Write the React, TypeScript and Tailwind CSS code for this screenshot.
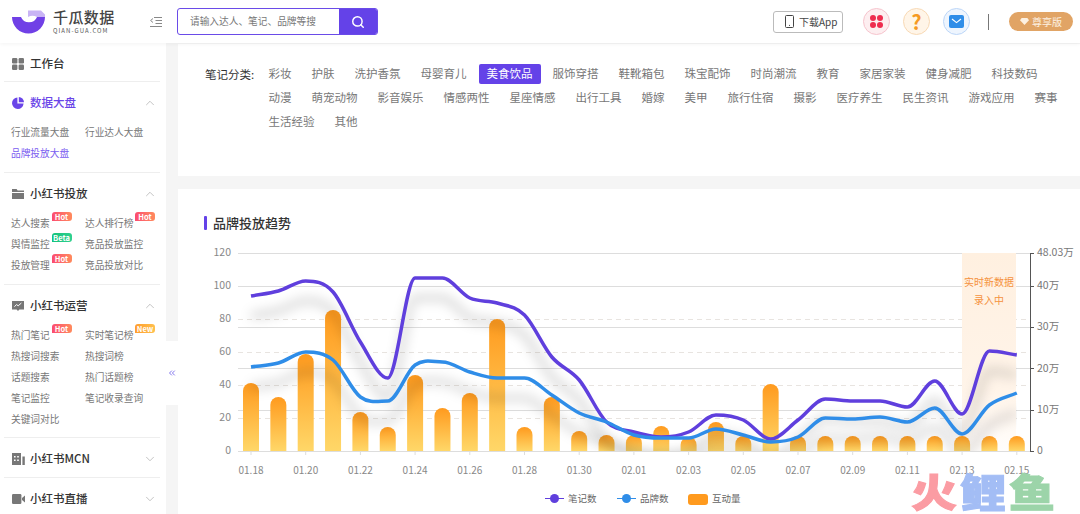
import { ChevronUp, ChevronDown, ChevronsLeft, Search } from "lucide-react";
import type { ReactNode } from "react";

const row1 = ["彩妆", "护肤", "洗护香氛", "母婴育儿", "美食饮品", "服饰穿搭", "鞋靴箱包", "珠宝配饰", "时尚潮流", "教育", "家居家装", "健身减肥", "科技数码"];
const row2 = ["动漫", "萌宠动物", "影音娱乐", "情感两性", "星座情感", "出行工具", "婚嫁", "美甲", "旅行住宿", "摄影", "医疗养生", "民生资讯", "游戏应用", "赛事"];
const row3 = ["生活经验", "其他"];
const categories = [...row1, ...row2, ...row3];

const barTops = [383, 397, 354, 310, 412, 427, 375, 408, 393, 319, 427, 397, 431, 435, 435, 426, 437, 422, 436, 384, 436, 436, 436, 436, 436, 436, 436, 436, 436];
const purple = [296, 291, 281, 292, 342, 378, 278, 278, 298, 303, 315, 357, 380, 422, 432, 437, 432, 415, 420, 439, 420, 399, 401, 401, 407, 381, 414, 351, 355];
const blue = [367, 363, 352, 360, 397, 401, 365, 362, 372, 378, 378, 395, 413, 422, 435, 438, 438, 429, 435, 442, 437, 418, 419, 417, 422, 408, 434, 405, 393];
const xLabels = ["01.18", "01.20", "01.22", "01.24", "01.26", "01.28", "01.30", "02.01", "02.03", "02.05", "02.07", "02.09", "02.11", "02.13", "02.15"];

const xAt = (i: number) => 251 + i * 27.35;

// smooth line through the points, tangent goes flat at peaks so it doesn't overshoot
function smooth(ys: number[]) {
  const last = ys.length - 1;
  const slope = (i: number) => {
    if (i === 0) return ys[1] - ys[0];
    if (i === last) return ys[last] - ys[last - 1];
    const a = ys[i - 1];
    const b = ys[i];
    const c = ys[i + 1];
    if ((b - a) * (c - b) <= 0) return 0;
    return (c - a) / 2;
  };
  const step = 27.35;
  let d = `M${xAt(0)} ${ys[0]}`;
  for (let i = 0; i < last; i++) {
    const c1y = ys[i] + slope(i) / 3;
    const c2y = ys[i + 1] - slope(i + 1) / 3;
    d += ` C${xAt(i) + step / 3} ${c1y} ${xAt(i + 1) - step / 3} ${c2y} ${xAt(i + 1)} ${ys[i + 1]}`;
  }
  return d;
}

function Badge({ kind, left }: { kind: string; left: string }) {
  const color =
    kind === "Hot"
      ? "bg-gradient-to-r from-[#fb4a70] to-[#ff8a5c]"
      : kind === "Beta"
        ? "bg-gradient-to-r from-[#12c27a] to-[#2fd08f]"
        : "bg-gradient-to-r from-[#ff9d2e] to-[#ffc04d]";
  return (
    <span className={`absolute top-0 flex h-[9px] w-[20px] items-center justify-center rounded-[3px] rounded-bl-none text-[7.5px] font-bold leading-none text-white ${left} ${color}`}>
      {kind}
    </span>
  );
}

type SubItem = { label: string; badge?: string; active?: boolean };

function Section({ icon, title, items, open = true, active = false, border = true, pb = "pb-[9px]" }: {
  icon: ReactNode;
  title: string;
  items?: SubItem[];
  open?: boolean;
  active?: boolean;
  border?: boolean;
  pb?: string;
}) {
  return (
    <div className={`ml-1 w-[156px] ${border ? "border-b border-[#eeeeee]" : ""} ${items ? pb : ""}`}>
      <div className="flex h-[39px] items-center pl-2 pr-[3px] pt-[3px]">
        <span className="flex w-[18px] shrink-0">{icon}</span>
        <span className={`flex-1 text-[11.5px] font-medium ${active ? "text-[#6a45e8]" : "text-[#333333]"}`}>{title}</span>
        {open ? <ChevronUp size={14} strokeWidth={1.2} className="text-[#aaaaaa]" /> : <ChevronDown size={14} strokeWidth={1.2} className="text-[#aaaaaa]" />}
      </div>
      {items && (
        <div className="grid grid-cols-[74px_1fr] pl-[7px]">
          {items.map((it, i) => (
            <div key={it.label} className={`relative flex h-[21px] items-center pt-[2px] text-[9.7px] ${it.active ? "text-[#7a5cf0]" : "text-[#777777]"}`}>
              {it.label}
              {it.badge && <Badge kind={it.badge} left={i % 2 === 0 ? "left-[40.5px]" : "left-[50px]"} />}
            </div>
          ))}
        </div>
      )}
    </div>
  );
}

function Sidebar() {
  return (
    <aside className="w-[166px] shrink-0 bg-white">
      <div className="ml-1 flex h-[39px] w-[156px] items-center border-b border-[#eeeeee] pl-2 pt-[3px]">
        <svg width="12" height="12" viewBox="0 0 12 12" className="mr-[6px]" fill="#777777">
          <rect width="5.4" height="5.4" rx="1.2" />
          <rect x="6.6" width="5.4" height="5.4" rx="1.2" />
          <rect y="6.6" width="5.4" height="5.4" rx="1.2" />
          <rect x="6.6" y="6.6" width="5.4" height="5.4" rx="1.2" />
        </svg>
        <span className="text-[11.5px] font-medium text-[#333333]">工作台</span>
      </div>
      <Section
        active
        title="数据大盘"
        icon={
          <svg width="12" height="12" viewBox="0 0 12 12" fill="#6a45e8">
            <path d="M5.4.4A5.8 5.8 0 1 0 11.6 6.6H5.4Z" />
            <path d="M6.8 0A5.4 5.4 0 0 1 12 5.2H6.8Z" />
          </svg>
        }
        items={[{ label: "行业流量大盘" }, { label: "行业达人大盘" }, { label: "品牌投放大盘", active: true }]}
      />
      <Section
        title="小红书投放"
        icon={
          <svg width="12" height="12" viewBox="0 0 12 12" fill="#777777">
            <path d="M0 1h4.6l1 1.6H12V4H0Z" />
            <path d="M0 5h12v6H0Z" />
          </svg>
        }
        items={[
          { label: "达人搜索", badge: "Hot" },
          { label: "达人排行榜", badge: "Hot" },
          { label: "舆情监控", badge: "Beta" },
          { label: "竞品投放监控" },
          { label: "投放管理", badge: "Hot" },
          { label: "竞品投放对比" },
        ]}
      />
      <Section
        title="小红书运营"
        pb="pb-2"
        icon={
          <svg width="12" height="12" viewBox="0 0 12 12">
            <path d="M0 1h12v8.4H7.4L6 11 4.6 9.4H0Z" fill="#777777" />
            <path d="M2.4 6.6 4.6 4.6 6.2 5.8 9.4 3" fill="none" stroke="#ffffff" strokeWidth="1" />
          </svg>
        }
        items={[
          { label: "热门笔记", badge: "Hot" },
          { label: "实时笔记榜", badge: "New" },
          { label: "热搜词搜索" },
          { label: "热搜词榜" },
          { label: "话题搜索" },
          { label: "热门话题榜" },
          { label: "笔记监控" },
          { label: "笔记收录查询" },
          { label: "关键词对比" },
        ]}
      />
      <Section
        open={false}
        title="小红书MCN"
        icon={
          <svg width="13" height="12" viewBox="0 0 13 12">
            <rect width="9" height="12" fill="#777777" />
            <rect x="10.4" y="3.5" width="2.4" height="8.5" fill="#777777" />
            <path d="M2 3h1.6v1.6H2ZM5.2 3h1.6v1.6H5.2ZM2 6.4h1.6V8H2ZM5.2 6.4h1.6V8H5.2Z" fill="#ffffff" />
          </svg>
        }
      />
      <Section
        open={false}
        border={false}
        title="小红书直播"
        icon={
          <svg width="13" height="12" viewBox="0 0 13 12" fill="#777777">
            <rect y="1" width="9.4" height="10" rx="1.2" />
            <path d="M10 5 13 2.6v6.8L10 7Z" />
          </svg>
        }
      />
    </aside>
  );
}

function Header() {
  return (
    <header className="relative z-10 flex h-[43px] shrink-0 items-center bg-white pl-3 shadow-[0_1px_4px_rgba(0,0,0,0.05)]">
      <svg width="34" height="26" viewBox="12 8 34 26" className="shrink-0">
        <path d="M12 16A16.5 16.5 0 0 0 45 16H37A8.5 8 0 0 1 21 16Z" fill="#7040e6" />
        <path d="M28 9.4H41L45 13.5V16H37A8 7 0 0 0 28 16Z" fill="#c9b4f5" />
      </svg>
      <div className="ml-[7px] flex w-[63px] shrink-0 flex-col">
        <span className="text-[15px] font-medium leading-[16px] tracking-[0.4px] text-[#444444]">千瓜数据</span>
        <span className="mt-[2px] text-[6px] leading-[7px] tracking-[1.05px] text-[#555555]">QIAN-GUA.COM</span>
      </div>
      <svg width="12" height="12" viewBox="0 0 12 12" className="ml-[34px] shrink-0" stroke="#888888" strokeWidth="1" fill="none">
        <path d="M4 1.5h8M5.5 4.5H12M5.5 7.5H12M0 10.5h12" />
        <path d="M3 2.5 0.6 4.5 3 6.5" />
      </svg>
      <div className="ml-[15px] flex h-[27px] w-[201px] shrink-0 overflow-hidden rounded-[3px] border border-[#6a4be8]">
        <span className="flex flex-1 items-center pl-3 text-[9.7px] text-[#777777]">请输入达人、笔记、品牌等搜</span>
        <span className="flex w-[38px] items-center justify-center bg-[#6442e8]">
          <Search size={14} strokeWidth={2.5} className="text-white" />
        </span>
      </div>
      <div className="ml-[395px] flex h-[22px] w-[70px] shrink-0 items-center rounded-[3px] border border-[#bbbbbb] pl-[11px]">
        <svg width="9" height="13" viewBox="0 0 9 13" fill="none" stroke="#444444" strokeWidth="1">
          <rect x="0.5" y="0.5" width="8" height="12" rx="1" />
          <path d="M4 10.4h1" />
        </svg>
        <span className="ml-[5px] text-[10px] text-[#444444]">下载App</span>
      </div>
      <span className="ml-5 flex h-[27px] w-[27px] shrink-0 items-center justify-center rounded-full border border-[#f6c4cd] bg-[#fdeef0]">
        <span className="grid grid-cols-2 gap-[1px]">
          <i className="h-[6px] w-[6px] rounded-full bg-[#ee2d4f]" />
          <i className="h-[6px] w-[6px] rounded-full bg-[#ee2d4f]" />
          <i className="h-[6px] w-[6px] rounded-full bg-[#ee2d4f]" />
          <i className="h-[6px] w-[6px] rounded-full bg-[#ee2d4f]" />
        </span>
      </span>
      <span className="ml-[13px] flex h-[27px] w-[27px] shrink-0 items-center justify-center rounded-full border border-[#f8d9b5] bg-[#fff5e8] text-[20px] font-bold leading-none text-[#f59a23]">?</span>
      <span className="ml-[13px] flex h-[27px] w-[27px] shrink-0 items-center justify-center rounded-full border border-[#bcd6f8] bg-[#eef5fe]">
        <svg width="15" height="13" viewBox="0 0 15 13">
          <rect width="15" height="13" rx="2" fill="#2f8de8" />
          <path d="M3 4 7.5 7.6 12 4" fill="none" stroke="#ffffff" strokeWidth="1.2" />
        </svg>
      </span>
      <span className="ml-[18px] h-[16px] w-px shrink-0 bg-[#777777]" />
      <span className="ml-5 flex h-[19px] w-[64px] shrink-0 items-center justify-center gap-[3px] rounded-full bg-[#e1a465] text-[10px] text-[#fdf1e2]">
        <svg width="9" height="7" viewBox="0 0 9 7" fill="#fdf1e2">
          <path d="M1.6 0h5.8L9 2.2 4.5 7 0 2.2Z" />
        </svg>
        尊享版
      </span>
    </header>
  );
}

function Chart() {
  const solid = [253.5, 286.5, 327.5, 368.5, 410.5];
  const dashed = [319.5, 352.5, 385.5, 418.5];
  const left = [[120, 252], [100, 285], [80, 318], [60, 351], [40, 384], [20, 417], [0, 450]];
  const right: [string, number][] = [["48.03万", 252], ["40万", 285], ["30万", 326], ["20万", 368], ["10万", 409], ["0", 450]];
  const purpleD = smooth(purple);
  const blueD = smooth(blue);
  return (
    <svg width="902" height="274" viewBox="178 240 902 274" className="block">
      <defs>
        <linearGradient id="bar" x1="0" y1="0" x2="0" y2="1">
          <stop offset="0" stopColor="#ff9a1e" />
          <stop offset="1" stopColor="#ffd768" />
        </linearGradient>
        <linearGradient id="band" x1="0" y1="0" x2="0" y2="1">
          <stop offset="0" stopColor="#fff0e0" />
          <stop offset="0.7" stopColor="#fff4e9" />
          <stop offset="1" stopColor="#fffdfb" />
        </linearGradient>
        <filter id="soft" x="-5%" y="-40%" width="110%" height="180%">
          <feGaussianBlur stdDeviation="6" />
        </filter>
        <clipPath id="plot">
          <rect x="238" y="253" width="779" height="198" />
        </clipPath>
      </defs>

      {solid.map((y) => (
        <line key={y} x1="238" x2="1030" y1={y} y2={y} stroke="#dddddd" />
      ))}
      {dashed.map((y) => (
        <line key={y} x1="238" x2="1030" y1={y} y2={y} stroke="#e8e4e0" strokeDasharray="5 4" />
      ))}
      <line x1="238" x2="1030" y1="451.5" y2="451.5" stroke="#dddddd" />
      {xLabels.map((_, i) => (
        <line key={i} x1={xAt(i * 2)} x2={xAt(i * 2)} y1="452" y2="455" stroke="#dddddd" />
      ))}

      <rect x="962" y="253" width="54" height="198" fill="url(#band)" />
      <text x="989" y="286" textAnchor="middle" className="fill-[#f5923e] text-[10px]">实时新数据</text>
      <text x="989" y="304" textAnchor="middle" className="fill-[#f5923e] text-[10px]">录入中</text>

      {barTops.map((top, i) => (
        <path
          key={i}
          d={`M${xAt(i) - 8} 451V${top + 8}a8 8 0 0 1 16 0V451Z`}
          fill="url(#bar)"
        />
      ))}

      <g clipPath="url(#plot)">
        <path d={purpleD} transform="translate(0 20)" fill="none" stroke="#000000" strokeOpacity="0.18" strokeWidth="6" filter="url(#soft)" />
        <path d={blueD} transform="translate(0 20)" fill="none" stroke="#000000" strokeOpacity="0.17" strokeWidth="6" filter="url(#soft)" />
      </g>
      <path d={purpleD} fill="none" stroke="#5f3fdd" strokeWidth="3.5" />
      <path d={blueD} fill="none" stroke="#2f8de8" strokeWidth="3.5" />

      <line x1="1030.5" x2="1030.5" y1="253" y2="451" stroke="#555555" />
      {[253, 286, 327, 368, 410, 451].map((y) => (
        <line key={y} x1="1030" x2="1034" y1={y + 0.5} y2={y + 0.5} stroke="#555555" />
      ))}

      {left.map(([v, y]) => (
        <text key={v} x="231" y={y + 3.5} textAnchor="end" className="fill-[#888888] text-[10.5px]">{v}</text>
      ))}
      {right.map(([v, y]) => (
        <text key={v} x="1037" y={y + 3.5} className="fill-[#777777] text-[10.5px]">{v}</text>
      ))}
      {xLabels.map((t, i) => (
        <text key={t} x={xAt(i * 2)} y="474" textAnchor="middle" className="fill-[#888888] text-[10px]">{t}</text>
      ))}

      <line x1="545" x2="564" y1="498.5" y2="498.5" stroke="#5f3fdd" />
      <circle cx="554.5" cy="498.5" r="4.5" fill="#5f3fdd" />
      <text x="568" y="502" className="fill-[#666666] text-[9.5px]">笔记数</text>
      <line x1="617" x2="636" y1="498.5" y2="498.5" stroke="#2f8de8" />
      <circle cx="626.5" cy="498.5" r="4.5" fill="#2f8de8" />
      <text x="640" y="502" className="fill-[#666666] text-[9.5px]">品牌数</text>
      <rect x="688" y="494" width="20" height="11" rx="3" fill="#ff9a1e" />
      <text x="712" y="502" className="fill-[#666666] text-[9.5px]">互动量</text>
    </svg>
  );
}

export default function App() {
  return (
    <div className="relative flex h-[514px] w-[1080px] flex-col overflow-hidden bg-[#f5f5f5] font-['Noto_Sans_CJK_SC',sans-serif]">
      <Header />
      <div className="flex min-h-0 flex-1">
        <Sidebar />
        <main className="ml-3 flex min-w-0 flex-1 flex-col gap-[13px] pt-px">
          <section className="flex h-[132px] shrink-0 bg-white pl-[27px] pt-5">
            <span className="w-[55.5px] shrink-0 text-[11.5px] leading-5 text-[#333333]">笔记分类:</span>
            <div className="flex w-[815px] flex-wrap content-start gap-x-1 gap-y-1">
              {categories.map((c) => (
                <span
                  key={c}
                  className={`flex h-5 items-center rounded-[2px] px-2 text-[11.5px] ${c === "美食饮品" ? "bg-[#6442e8] text-white" : "text-[#777777]"}`}
                >
                  {c}
                </span>
              ))}
            </div>
          </section>
          <section className="flex-1 bg-white">
            <div className="flex h-[51px] items-end pb-[8px] pl-[26px]">
              <span className="mr-[6px] mb-[2px] h-[14px] w-[3px] rounded-[1px] bg-[#6442e8]" />
              <h2 className="text-[13px] font-medium leading-[18px] text-[#333333]">品牌投放趋势</h2>
            </div>
            <Chart />
          </section>
        </main>
      </div>
      {/* sidebar collapse tab */}
      <span className="absolute left-[166px] top-[341px] flex h-[64px] w-3 items-center justify-center bg-white text-[#6a5be8]">
        <ChevronsLeft size={10} strokeWidth={2} />
      </span>
      {/* watermark */}
      <div className="absolute left-[911px] top-[467px] flex origin-center scale-y-[0.85] items-center gap-[3px] text-[46px] font-black leading-[46px] [-webkit-text-stroke:1.2px_currentColor]">
        <span className="text-[#fb9ca3]">火</span>
        <span className="text-[#a3bdf5]">鲤</span>
        <span className="text-[#9cd4a9]">鱼</span>
      </div>
    </div>
  );
}
